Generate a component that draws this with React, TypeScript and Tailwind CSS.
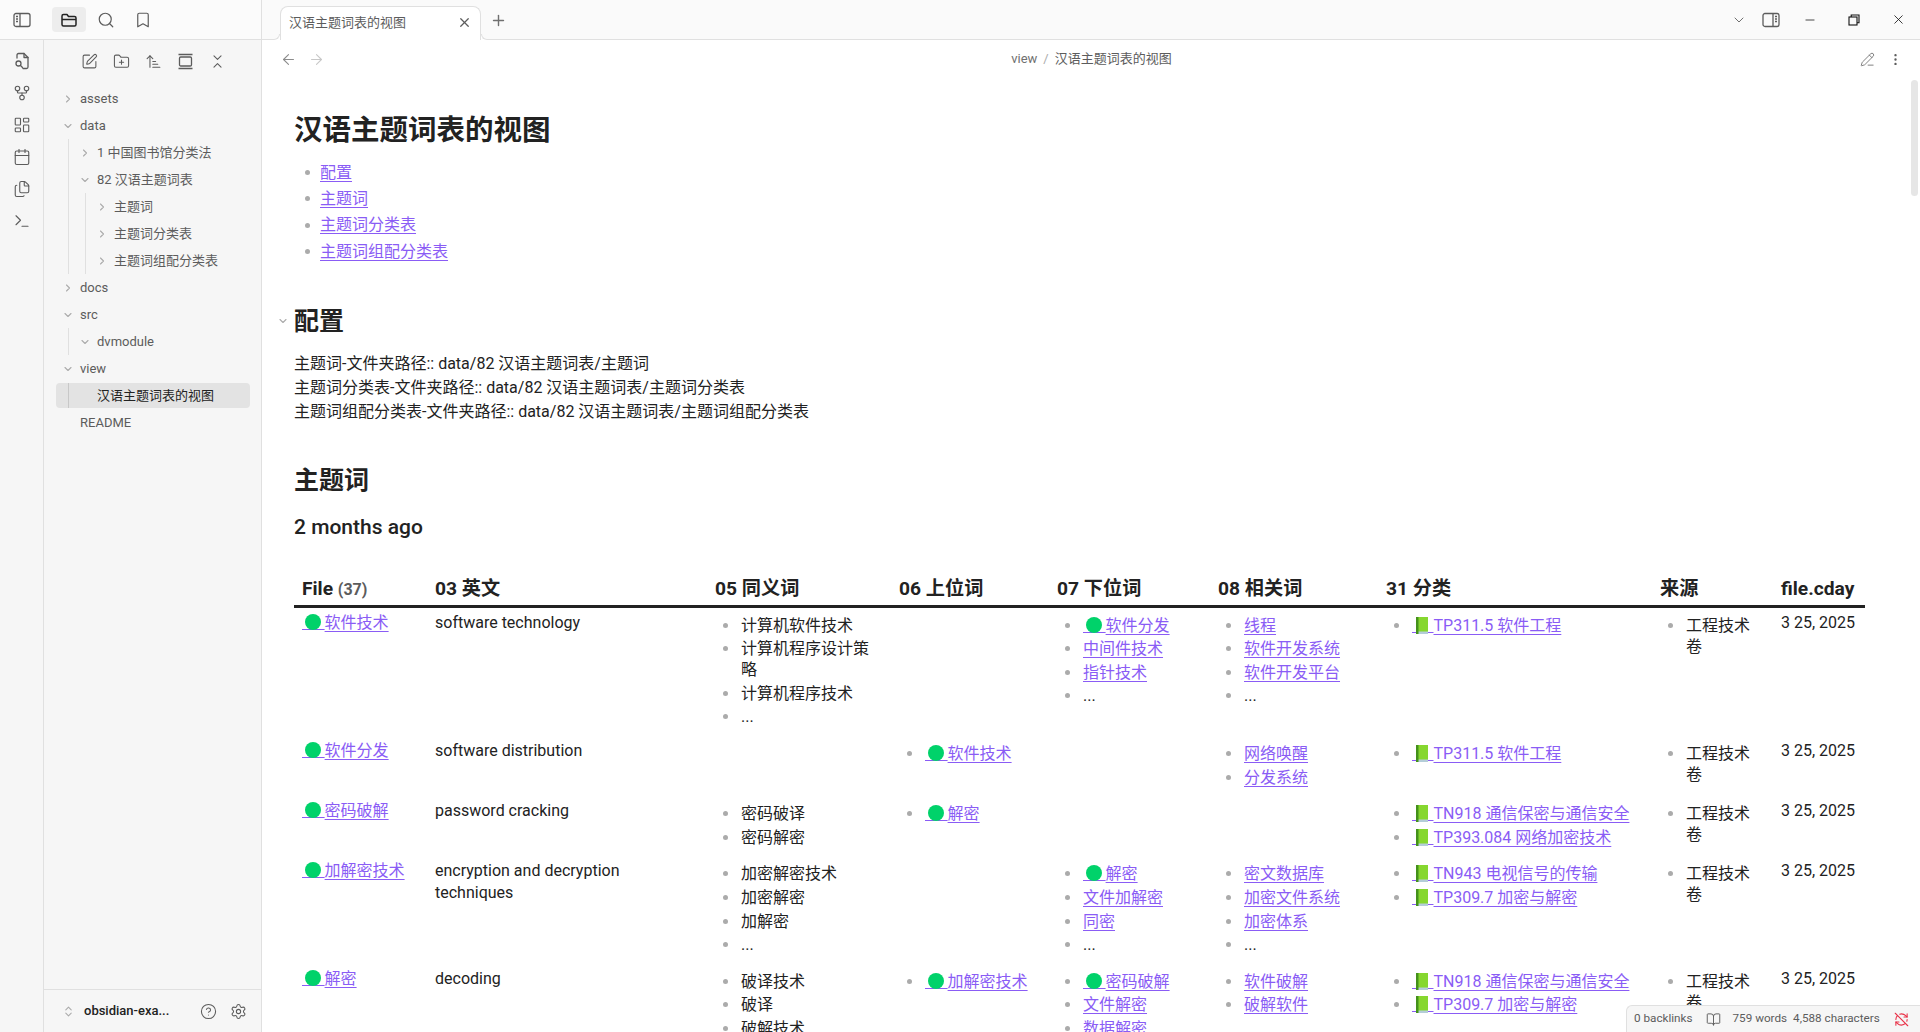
import { ArrowLeft, ArrowRight, ArrowUpNarrowWide, BookOpen, Bookmark, Calendar, ChevronDown, ChevronRight, ChevronsDownUp, ChevronsUpDown, CircleHelp, EllipsisVertical, Files, FolderPlus, GitFork, LayoutDashboard, Minus, PencilLine, Plus, RefreshCwOff, Search, Settings, SquarePen, Terminal, X } from "lucide-react";
import type { ReactNode } from "react";

type Item = { text: string; kind?: "plain" | "link" | "dot" | "book" };

interface Row {
  file: string;
  en: string;
  syn: string[];
  up: Item[];
  down: Item[];
  rel: string[];
  cls: string[];
}

const rows: Row[] = [
  {
    file: "软件技术",
    en: "software technology",
    syn: ["计算机软件技术", "计算机程序设计策略", "计算机程序技术", "..."],
    up: [],
    down: [{ text: "软件分发", kind: "dot" }, { text: "中间件技术", kind: "link" }, { text: "指针技术", kind: "link" }, { text: "...", kind: "plain" }],
    rel: ["线程", "软件开发系统", "软件开发平台", "..."],
    cls: ["TP311.5 软件工程"],
  },
  {
    file: "软件分发",
    en: "software distribution",
    syn: [],
    up: [{ text: "软件技术", kind: "dot" }],
    down: [],
    rel: ["网络唤醒", "分发系统"],
    cls: ["TP311.5 软件工程"],
  },
  {
    file: "密码破解",
    en: "password cracking",
    syn: ["密码破译", "密码解密"],
    up: [{ text: "解密", kind: "dot" }],
    down: [],
    rel: [],
    cls: ["TN918 通信保密与通信安全", "TP393.084 网络加密技术"],
  },
  {
    file: "加解密技术",
    en: "encryption and decryption techniques",
    syn: ["加密解密技术", "加密解密", "加解密", "..."],
    up: [],
    down: [{ text: "解密", kind: "dot" }, { text: "文件加解密", kind: "link" }, { text: "同密", kind: "link" }, { text: "...", kind: "plain" }],
    rel: ["密文数据库", "加密文件系统", "加密体系", "..."],
    cls: ["TN943 电视信号的传输", "TP309.7 加密与解密"],
  },
  {
    file: "解密",
    en: "decoding",
    syn: ["破译技术", "破译", "破解技术", "..."],
    up: [{ text: "加解密技术", kind: "dot" }],
    down: [{ text: "密码破解", kind: "dot" }, { text: "文件解密", kind: "link" }, { text: "数据解密", kind: "link" }, { text: "...", kind: "plain" }],
    rel: ["软件破解", "破解软件"],
    cls: ["TN918 通信保密与通信安全", "TP309.7 加密与解密"],
  },
];

const link = "text-[#8a5cf5] underline underline-offset-[3px] decoration-1";
const cell = "px-[8px] pt-[4px] pb-[6px] align-top";

const DotEmoji = () => (
  <svg width="22.6" height="20" viewBox="0 0 22.6 20" className="inline-block align-[-5px]">
    <rect x="0" y="16" width="22.6" height="1" fill="#8a5cf5" />
    <circle cx="11" cy="9" r="8" fill="#00d26a" />
  </svg>
);

const BookEmoji = () => (
  <svg width="21.5" height="20" viewBox="0 0 21.5 20" className="inline-block align-[-5px]">
    <rect x="0" y="16" width="21.5" height="1" fill="#8a5cf5" />
    <rect x="6" y="15" width="10" height="3" fill="#b4cdd8" />
    <rect x="4" y="1" width="12" height="14.5" fill="#86d72f" />
    <rect x="4" y="1" width="2.5" height="17" fill="#44911b" />
  </svg>
);

const Bulleted = ({ children }: { children: ReactNode }) => (
  <li className="flex mb-[2.6px] leading-[21px]">
    <span className="mt-[8px] ml-[8px] mr-[13px] h-[5px] w-[5px] shrink-0 rounded-full bg-[#ababab]" />
    <div className="min-w-0">{children}</div>
  </li>
);

const ItemList = ({ items }: { items: Item[] }) =>
  items.length === 0 ? null : (
    <ul className="pt-[3px]">
      {items.map((it, i) => (
        <Bulleted key={i}>
          {it.kind === "plain" || !it.kind ? (
            it.text
          ) : (
            <a className={link}>
              {it.kind === "dot" && <DotEmoji />}
              {it.kind === "book" && <BookEmoji />}
              {it.text}
            </a>
          )}
        </Bulleted>
      ))}
    </ul>
  );

const TreeRow = ({ label, open, noChevron }: { label: string; open?: boolean; noChevron?: boolean }) => (
  <div className="flex h-[27px] items-center text-[13px] text-[#5c5c5c]">
    <span className="-ml-[6px] mr-[6px] flex w-[12px] justify-center text-[#ababab]">
      {noChevron ? null : open ? <ChevronDown size={16} strokeWidth={2.2} /> : <ChevronRight size={16} strokeWidth={2.2} />}
    </span>
    {label}
  </div>
);

const Group = ({ children }: { children: ReactNode }) => (
  <div className="border-l border-[#e0e0e0] pl-[16px]">{children}</div>
);

const Tab = () => (
  <div className="relative -mb-px mt-[6px] ml-[18px] flex h-[34px] w-[201px] items-center rounded-t-lg border border-b-0 border-[#e0e0e0] bg-white pb-[2px] pl-[8px] pr-[8px] text-[13px] text-[#5c5c5c]">
    <span className="absolute -left-[7px] bottom-0 h-[6px] w-[6px] bg-white">
      <span className="block h-full w-full rounded-br-[6px] border-r border-b border-[#e0e0e0] bg-[#fafafa]" />
    </span>
    <span className="absolute -right-[7px] bottom-0 h-[6px] w-[6px] bg-white">
      <span className="block h-full w-full rounded-bl-[6px] border-l border-b border-[#e0e0e0] bg-[#fafafa]" />
    </span>
    汉语主题词表的视图
    <X size={15} className="ml-auto text-[#5c5c5c]" />
  </div>
);

const Th = ({ className, children }: { className: string; children: ReactNode }) => (
  <th className={`${className} px-[8px] pt-[5px] pb-[4px] text-left align-top text-[19.2px] leading-[22px] font-bold`}>{children}</th>
);

export default function App() {
  return (
    <div className="flex h-screen w-full overflow-hidden bg-white font-['Roboto','Noto_Sans_CJK_SC',sans-serif] text-[16px] text-[#222222]">
      <aside className="flex w-[262px] shrink-0 flex-col border-r border-[#e0e0e0] bg-[#f6f6f6]">
        <div className="flex h-[40px] shrink-0 items-center border-b border-[#e0e0e0] bg-[#fbfbfb] text-[#5c5c5c]">
          <div className="flex w-[44px] justify-center">
            <svg width="18" height="18" viewBox="0 0 18 18" fill="none" stroke="currentColor" strokeWidth="1.3">
              <rect x="1" y="2.5" width="16" height="13" rx="2" />
              <path d="M7 2.5v13M3 5.5h2M3 8h2M3 10.5h2" />
            </svg>
          </div>
          <div className="ml-[8px] flex gap-[3px]">
            <div className="flex h-[25px] w-[34px] items-center justify-center rounded bg-[#ededed] text-[#222222]">
              <svg width="18" height="18" viewBox="0 0 18 18" fill="none" stroke="currentColor" strokeWidth="1.5" strokeLinejoin="round">
                <path d="M2 5a1.5 1.5 0 0 1 1.5-1.5H7l1.5 2h6A1.5 1.5 0 0 1 16 7v6.5a1.5 1.5 0 0 1-1.5 1.5h-11A1.5 1.5 0 0 1 2 13.5z" />
                <path d="M2 8.5h14" />
              </svg>
            </div>
            <div className="flex h-[25px] w-[34px] items-center justify-center">
              <Search size={18} strokeWidth={1.6} />
            </div>
            <div className="flex h-[25px] w-[34px] items-center justify-center">
              <Bookmark size={18} strokeWidth={1.6} />
            </div>
          </div>
        </div>
        <div className="flex min-h-0 flex-1">
          <div className="flex w-[44px] shrink-0 flex-col items-center gap-[14px] border-r border-[#e0e0e0] pt-[12px] text-[#5c5c5c]">
            <svg width="18" height="18" viewBox="0 0 18 18" fill="none" stroke="currentColor" strokeWidth="1.3" strokeLinecap="round" strokeLinejoin="round">
              <path d="M4 6V3a1.5 1.5 0 0 1 1.5-1.5H11L15 5.5V15a1.5 1.5 0 0 1-1.5 1.5H10" />
              <path d="M11 1.5V5.5H15" />
              <circle cx="5.5" cy="11.5" r="2.5" />
              <path d="M7.5 13.5L9.5 15.5" />
            </svg>
            <GitFork size={18} strokeWidth={1.5} />
            <LayoutDashboard size={18} strokeWidth={1.5} />
            <Calendar size={18} strokeWidth={1.5} />
            <Files size={18} strokeWidth={1.5} />
            <Terminal size={18} strokeWidth={1.5} />
          </div>
          <div className="flex min-w-0 flex-1 flex-col">
            <div className="flex h-[42px] items-center pl-[29px] text-[#5c5c5c]">
              <div className="flex w-[32px] justify-center"><SquarePen size={17} strokeWidth={1.5} /></div>
              <div className="flex w-[32px] justify-center"><FolderPlus size={17} strokeWidth={1.5} /></div>
              <div className="flex w-[32px] justify-center"><ArrowUpNarrowWide size={17} strokeWidth={1.5} /></div>
              <div className="flex w-[32px] justify-center">
                <svg width="17" height="17" viewBox="0 0 17 17" fill="none" stroke="currentColor" strokeWidth="1.3">
                  <path d="M1.5 1.5h14M1.5 15.5h14" />
                  <rect x="2.5" y="4" width="12" height="9" rx="1.2" />
                </svg>
              </div>
              <div className="flex w-[32px] justify-center"><ChevronsDownUp size={17} strokeWidth={1.5} /></div>
            </div>
            <div className="mt-[3px] pl-[24px]">
              <TreeRow label="assets" />
              <TreeRow label="data" open />
              <Group>
                <TreeRow label="1 中国图书馆分类法" />
                <TreeRow label="82 汉语主题词表" open />
                <Group>
                  <TreeRow label="主题词" />
                  <TreeRow label="主题词分类表" />
                  <TreeRow label="主题词组配分类表" />
                </Group>
              </Group>
              <TreeRow label="docs" />
              <TreeRow label="src" open />
              <Group>
                <TreeRow label="dvmodule" open />
              </Group>
              <TreeRow label="view" open />
              <div className="-ml-[12px] my-[1px] h-[25px] w-[194px] rounded bg-[#e3e3e3] text-[13px] text-[#222222]">
                <div className="ml-[12px] flex h-full items-center border-l border-[#c8c8c8] pl-[28px]">汉语主题词表的视图</div>
              </div>
              <TreeRow label="README" noChevron />
            </div>
            <div className="mt-auto flex h-[43px] items-center border-t border-[#e0e0e0] pl-[18px] pr-[14px]">
              <ChevronsUpDown size={13} className="text-[#ababab]" />
              <span className="ml-[9px] text-[13px] font-medium text-[#222222]">obsidian-exa...</span>
              <CircleHelp size={17} strokeWidth={1.5} className="ml-auto text-[#5c5c5c]" />
              <Settings size={17} strokeWidth={1.5} className="ml-[13px] text-[#5c5c5c]" />
            </div>
          </div>
        </div>
      </aside>

      <main className="relative flex min-w-0 flex-1 flex-col">
        <div className="flex h-[40px] shrink-0 items-start border-b border-[#e0e0e0] bg-[#fafafa]">
          <Tab />
          <Plus size={17} className="mt-[12px] ml-[9px] text-[#707070]" />
          <div className="ml-auto flex h-full items-center">
            <div className="flex w-[32px] justify-center text-[#707070]"><ChevronDown size={16} strokeWidth={1.5} /></div>
            <div className="mr-[1px] flex w-[32px] justify-center text-[#5c5c5c]">
              <svg width="18" height="18" viewBox="0 0 18 18" fill="none" stroke="currentColor" strokeWidth="1.3">
                <rect x="1" y="2.5" width="16" height="13" rx="2" />
                <path d="M11 2.5v13M13 5.5h2M13 8h2M13 10.5h2" />
              </svg>
            </div>
            <div className="flex w-[44px] justify-center text-[#111111]"><Minus size={14} strokeWidth={1.3} /></div>
            <div className="flex w-[44px] justify-center text-[#111111]">
              <svg width="12" height="12" viewBox="0 0 12 12" fill="none" stroke="currentColor" strokeWidth="1.1">
                <rect x="1" y="3" width="8" height="8" />
                <path d="M3.2 3V1h7.8v7.8H9" />
              </svg>
            </div>
            <div className="flex w-[44px] justify-center text-[#111111]"><X size={15} strokeWidth={1.3} /></div>
          </div>
        </div>

        <div className="flex h-[38px] shrink-0 items-center pl-[12px] pr-[11px]">
          <div className="flex w-[28px] justify-center text-[#8c8c8c]"><ArrowLeft size={17} strokeWidth={1.5} /></div>
          <div className="flex w-[28px] justify-center text-[#c8c8c8]"><ArrowRight size={17} strokeWidth={1.5} /></div>
          <div className="flex-1 text-center text-[13px] text-[#5c5c5c]">
            <span className="text-[#707070]">view</span>
            <span className="mx-[6px] text-[#ababab]">/</span>
            汉语主题词表的视图
          </div>
          <div className="flex w-[28px] justify-center text-[#707070]"><PencilLine size={15} strokeWidth={1.4} /></div>
          <div className="flex w-[28px] justify-center text-[#5c5c5c]"><EllipsisVertical size={15} strokeWidth={1.8} /></div>
        </div>

        <div className="min-h-0 flex-1 overflow-hidden pl-[32px] pr-[55px] pt-[36px]">
          <h1 className="text-[28.5px] leading-[34.5px] font-bold">汉语主题词表的视图</h1>
          <ul className="mt-[11px]">
            {["配置", "主题词", "主题词分类表", "主题词组配分类表"].map((t) => (
              <li key={t} className="flex h-[26.3px] items-center">
                <span className="ml-[11px] mr-[10px] h-[5px] w-[5px] rounded-full bg-[#ababab]" />
                <a className={link}>{t}</a>
              </li>
            ))}
          </ul>
          <h2 className="mt-[41px] flex items-center text-[25px] leading-[31px] font-bold">
            <span className="-ml-[17px] mr-[5px] flex w-[12px] justify-center text-[#ababab]"><ChevronDown size={16} strokeWidth={2.2} /></span>
            配置
          </h2>
          <div className="mt-[15px] leading-[24px]">
            <p>主题词-文件夹路径:: data/82 汉语主题词表/主题词</p>
            <p>主题词分类表-文件夹路径:: data/82 汉语主题词表/主题词分类表</p>
            <p>主题词组配分类表-文件夹路径:: data/82 汉语主题词表/主题词组配分类表</p>
          </div>
          <h2 className="mt-[41px] text-[25px] leading-[31px] font-bold">主题词</h2>
          <h3 className="mt-[19px] text-[21px] leading-[24px] font-medium">2 months ago</h3>
          <table className="mt-[34px] w-full table-fixed border-collapse">
            <thead>
              <tr className="border-b-[3px] border-[#222222]">
                <Th className="w-[133px]">
                  File <span className="text-[16px] text-[#5c5c5c]">(37)</span>
                </Th>
                <Th className="w-[280px]">03 英文</Th>
                <Th className="w-[184px]">05 同义词</Th>
                <Th className="w-[158px]">06 上位词</Th>
                <Th className="w-[161px]">07 下位词</Th>
                <Th className="w-[168px]">08 相关词</Th>
                <Th className="w-[274px]">31 分类</Th>
                <Th className="w-[121px]">来源</Th>
                <Th className="w-[92px]">file.cday</Th>
              </tr>
            </thead>
            <tbody className="leading-[22px]">
              {rows.map((r) => (
                <tr key={r.file}>
                  <td className={cell}>
                    <a className={link}><DotEmoji />{r.file}</a>
                  </td>
                  <td className={cell}>{r.en}</td>
                  <td className={cell}>
                    <ItemList items={r.syn.map((text) => ({ text, kind: "plain" as const }))} />
                  </td>
                  <td className={cell}><ItemList items={r.up} /></td>
                  <td className={cell}><ItemList items={r.down} /></td>
                  <td className={cell}>
                    <ItemList items={r.rel.map((text) => ({ text, kind: text === "..." ? ("plain" as const) : ("link" as const) }))} />
                  </td>
                  <td className={cell}>
                    <ItemList items={r.cls.map((text) => ({ text, kind: "book" as const }))} />
                  </td>
                  <td className={cell}>
                    <ItemList items={[{ text: "工程技术卷", kind: "plain" }]} />
                  </td>
                  <td className={cell}>3 25, 2025</td>
                </tr>
              ))}
            </tbody>
          </table>
        </div>

        {/* scrollbar and status bar sit on top of the note */}
        <div className="absolute right-[2px] top-[80px] h-[116px] w-[7px] rounded-full bg-[#e6e6e6]" />
        <div className="absolute right-0 bottom-0 flex h-[27px] w-[294px] items-center whitespace-nowrap rounded-tl-md border-t border-l border-[#e0e0e0] bg-[#f6f6f6] pl-[7px] text-[11.7px] text-[#5c5c5c]">
          <span>0 backlinks</span>
          <BookOpen size={15} strokeWidth={1.5} className="ml-[13px]" />
          <span className="ml-[12px]">759 words</span>
          <span className="ml-[6px]">4,588 characters</span>
          <RefreshCwOff size={15} strokeWidth={1.7} className="ml-auto mr-[11px] text-[#e93147]" />
        </div>
      </main>
    </div>
  );
}
